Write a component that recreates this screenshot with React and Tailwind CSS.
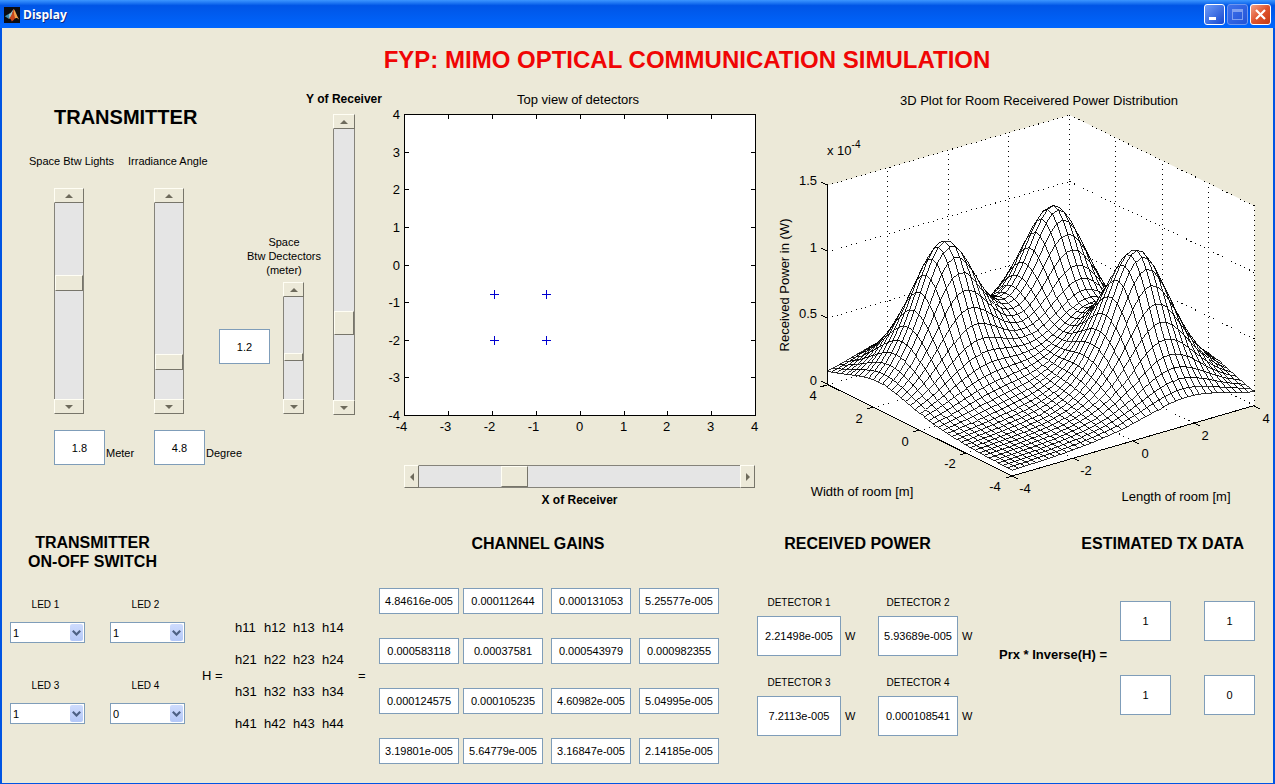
import React from "react";

const valueBox =
  "border border-[#7f9db9] bg-white text-center text-[11px] text-black outline-none";
const bevel =
  "border border-t-[#fffef4] border-l-[#fffef4] border-r-[#77756a] border-b-[#77756a] bg-[#ece9d8]";

const arrowPoints = {
  up: "4,0 8,4 0,4",
  down: "0,0 8,0 4,4",
  left: "4,0 4,8 0,4",
  right: "0,0 4,4 0,8",
};

function ArrowButton({ dir, label }) {
  const vertical = dir === "up" || dir === "down";
  return (
    <button
      type="button"
      aria-label={label}
      className={`flex shrink-0 items-center justify-center ${bevel} ${vertical ? "h-[15px] w-full" : "h-full w-[15px]"}`}
    >
      <svg
        width={vertical ? 8 : 4}
        height={vertical ? 4 : 8}
        viewBox={vertical ? "0 0 8 4" : "0 0 4 8"}
        aria-hidden="true"
      >
        <polygon points={arrowPoints[dir]} fill="#6e6b5c" />
      </svg>
    </button>
  );
}

const thumb =
  "appearance-none [&::-webkit-slider-thumb]:appearance-none [&::-webkit-slider-thumb]:box-border [&::-webkit-slider-thumb]:rounded-none [&::-webkit-slider-thumb]:border [&::-webkit-slider-thumb]:border-t-[#fffef4] [&::-webkit-slider-thumb]:border-l-[#fffef4] [&::-webkit-slider-thumb]:border-r-[#77756a] [&::-webkit-slider-thumb]:border-b-[#77756a] [&::-webkit-slider-thumb]:bg-[#ece9d8]";

function VerticalSlider({ id, label, value, size, thumbSize }) {
  return (
    <div className={`flex shrink-0 flex-col ${size}`}>
      <ArrowButton dir="up" label={`Increase ${label}`} />
      <input
        id={id}
        type="range"
        min="0"
        max="1000"
        defaultValue={value}
        aria-label={label}
        className={`m-0 min-h-0 w-full flex-1 border-r border-l border-[#85837a] bg-[#e5e5e5] [direction:rtl] [writing-mode:vertical-lr] ${thumb} ${thumbSize}`}
      />
      <ArrowButton dir="down" label={`Decrease ${label}`} />
    </div>
  );
}

function TransmitterPanel() {
  return (
    <section className="whitespace-nowrap">
      <h2 className="mt-3 pl-[52px] text-[20px] leading-[26px] font-bold">TRANSMITTER</h2>
      <div className="mt-6 flex gap-[14px] pl-[27px] text-[11px] leading-[14px]">
        <label htmlFor="space-lights">Space Btw Lights</label>
        <label htmlFor="irradiance">Irradiance Angle</label>
      </div>
      <div className="mt-5 flex gap-[70px] pl-[52px]">
        <VerticalSlider
          id="space-lights"
          label="Space Btw Lights"
          value={598}
          size="h-[226px] w-[30px]"
          thumbSize="[&::-webkit-slider-thumb]:h-[16px] [&::-webkit-slider-thumb]:w-[28px]"
        />
        <VerticalSlider
          id="irradiance"
          label="Irradiance Angle"
          value={163}
          size="h-[226px] w-[30px]"
          thumbSize="[&::-webkit-slider-thumb]:h-[16px] [&::-webkit-slider-thumb]:w-[28px]"
        />
      </div>
      <div className="mt-4 flex pl-[52px] text-[11px]">
        {[
          ["1.8", "Meter"],
          ["4.8", "Degree"],
        ].map(([v, unit]) => (
          <label key={unit} className="flex w-[100px] shrink-0 items-center gap-px">
            <input className={`h-[35px] w-[51px] shrink-0 ${valueBox}`} defaultValue={v} />
            <span className="pt-3">{unit}</span>
          </label>
        ))}
      </div>
    </section>
  );
}

function ReceiverPanel() {
  return (
    <section className="flex">
      <div className="w-[108px] shrink-0 pt-[143px]">
        <label
          htmlFor="space-detectors"
          className="block pl-[22px] text-center text-[11px] leading-[14px] whitespace-nowrap"
        >
          Space
          <br />
          Btw Dectectors
          <br />
          (meter)
        </label>
        <div className="mt-[5px] flex items-start gap-[13px]">
          <input
            aria-label="Space between detectors in meters"
            className={`mt-[47px] h-[35px] w-[51px] ${valueBox}`}
            defaultValue="1.2"
          />
          <VerticalSlider
            id="space-detectors"
            label="Space Btw Detectors"
            value={400}
            size="h-[132px] w-[21px]"
            thumbSize="[&::-webkit-slider-thumb]:h-[8px] [&::-webkit-slider-thumb]:w-[19px]"
          />
        </div>
      </div>
      <div className="flex w-[34px] flex-col items-center">
        <label
          htmlFor="y-receiver"
          className="mb-2 text-[12px] leading-[14px] font-bold whitespace-nowrap"
        >
          Y of Receiver
        </label>
        <VerticalSlider
          id="y-receiver"
          label="Y of Receiver"
          value={263}
          size="h-[301px] w-[22px]"
          thumbSize="[&::-webkit-slider-thumb]:h-[24px] [&::-webkit-slider-thumb]:w-[20px]"
        />
      </div>
    </section>
  );
}

function DetectorPlot() {
  const ticks = [-4, -3, -2, -1, 0, 1, 2, 3, 4];
  const px = (v) => Math.round(404 + (v + 4) * 43.9) + 0.5;
  const py = (v) => Math.round(415 - (v + 4) * 37.6) + 0.5;
  const marks = [
    [494, 295],
    [546, 295],
    [494, 341],
    [546, 341],
  ];
  return (
    <svg
      viewBox="387 92 378 346"
      className="block h-auto w-full"
      fontFamily="'Liberation Sans', Arial, sans-serif"
      fontSize="13"
      role="img"
      aria-label="Top view of detectors"
    >
      <text x="578" y="104" textAnchor="middle">
        Top view of detectors
      </text>
      <rect x="404.5" y="114.5" width="351" height="301" fill="#fff" stroke="#000" />
      {ticks.map((t) => (
        <g key={t} stroke="#000">
          <path
            d={`M${px(t)} 415v-4M${px(t)} 115v4M405 ${py(t)}h4M755 ${py(t)}h-4`}
            fill="none"
          />
          <text stroke="none" x={px(t) - (t < 0 ? 3 : 1)} y="431" textAnchor="middle">
            {t}
          </text>
          <text stroke="none" x="400" y={py(t) + 4} textAnchor="end">
            {t}
          </text>
        </g>
      ))}
      {marks.map(([x, y]) => (
        <path
          key={`${x}-${y}`}
          d={`M${x - 4} ${y - 0.5}h9M${x + 0.5} ${y - 5}v9`}
          stroke="#0000d0"
          fill="none"
        />
      ))}
    </svg>
  );
}

function project(l, w, z) {
  return [
    1012 + ((l + 4) / 8) * 242.5 - ((w + 4) / 8) * 185,
    476 - ((l + 4) / 8) * 70.5 - ((w + 4) / 8) * 91 - z * 133,
  ];
}

const lights = [
  [-1.8, 1.8],
  [1.8, 1.8],
  [1.8, -1.8],
];

function receivedPower(l, w) {
  return lights.reduce((sum, [a, b]) => {
    const r2 = (l - a) ** 2 + (w - b) ** 2;
    return sum + 1.04 * Math.pow(1 + r2 / 3.3, -2);
  }, 0.028);
}

function meshCells() {
  const n = 40;
  const at = (i) => -4 + (8 * i) / n;
  const cells = [];
  for (let i = n - 1; i >= 0; i--) {
    for (let j = n - 1; j >= 0; j--) {
      const corners = [
        [at(i), at(j)],
        [at(i + 1), at(j)],
        [at(i + 1), at(j + 1)],
        [at(i), at(j + 1)],
      ];
      cells.push(
        "M" +
          corners
            .map(([l, w]) =>
              project(l, w, receivedPower(l, w))
                .map((c) => c.toFixed(1))
                .join(" ")
            )
            .join("L") +
          "Z"
      );
    }
  }
  return cells;
}

const cells = meshCells();

function line(a, b) {
  return `M${project(...a).join(" ")}L${project(...b).join(" ")}`;
}

const gridLines = [
  ...[0, 0.5, 1, 1.5].flatMap((z) => [
    line([-4, 4, z], [4, 4, z]),
    line([4, 4, z], [4, -4, z]),
  ]),
  ...[-2, 0, 2, 4].flatMap((v) => [
    line([v, 4, 0], [v, 4, 1.5]),
    line([4, -v, 0], [4, -v, 1.5]),
    line([v, -4, 0], [v, 4, 0]),
    line([-4, v, 0], [4, v, 0]),
  ]),
];

function PowerPlot() {
  const zLabels = [
    ["1.5", 185],
    ["1", 252],
    ["0.5", 318],
    ["0", 385],
  ];
  const widthLabels = [
    ["4", 813, 400],
    ["2", 859, 423],
    ["0", 905, 446],
    ["-2", 950, 468],
    ["-4", 995, 491],
  ];
  const lengthLabels = [
    ["-4", 1025, 493],
    ["-2", 1086, 475],
    ["0", 1145, 458],
    ["2", 1205, 440],
    ["4", 1266, 423],
  ];
  return (
    <svg
      viewBox="765 92 508 418"
      className="block h-auto w-full"
      fontFamily="'Liberation Sans', Arial, sans-serif"
      fontSize="13"
      role="img"
      aria-label="3D plot of received power over the room"
    >
      <text x="1039" y="105" textAnchor="middle">
        3D Plot for Room Receivered Power Distribution
      </text>
      <polygon
        points="827,185.5 1069.5,115 1254.5,206 1254.5,405.5 1012,476 827,385"
        fill="#fff"
      />
      <path
        d={gridLines.join("")}
        fill="none"
        stroke="#000"
        strokeDasharray="1 4"
        shapeRendering="crispEdges"
      />
      <g fill="#fff" stroke="#000" strokeWidth="0.8" shapeRendering="crispEdges">
        {cells.map((d, i) => (
          <path key={i} d={d} />
        ))}
      </g>
      <path
        d="M827.500 184V384.500L1012 476L1254.500 405.500"
        fill="none"
        stroke="#000"
        shapeRendering="crispEdges"
      />
      <path
        d="M827 185l-6-3M827 251l-6-3M827 318l-6-3M827 384l-6-3M827 385l-7 2M873 407l-6 2M919 430l-6 2M966 453l-6 2M1012 476l-6 2M1012 476l6 3M1073 458l6 3M1133 441l6 3M1194 423l6 3M1254 406l6 3"
        stroke="#000"
        fill="none"
        shapeRendering="crispEdges"
      />
      <text x="827" y="155">
        x 10
        <tspan dy="-7" fontSize="10">
          -4
        </tspan>
      </text>
      {zLabels.map(([t, y]) => (
        <text key={t} x="817" y={y} textAnchor="end">
          {t}
        </text>
      ))}
      {[...widthLabels, ...lengthLabels].map(([t, x, y]) => (
        <text key={`${x}`} x={x} y={y} textAnchor="middle">
          {t}
        </text>
      ))}
      <text x="862" y="496" textAnchor="middle">
        Width of room [m]
      </text>
      <text x="1176" y="501" textAnchor="middle">
        Length of room [m]
      </text>
      <text transform="translate(789 285) rotate(-90)" textAnchor="middle">
        Received Power in (W)
      </text>
    </svg>
  );
}

function LedSelect({ name, value }) {
  return (
    <label className="flex w-[75px] flex-col items-center gap-[10px] text-[10px] leading-[14px]">
      <span className="pr-1">{name}</span>
      <span className="relative block w-full">
        <select
          defaultValue={value}
          className="block h-[21px] w-full appearance-none border border-[#7f9db9] bg-white pl-[2px] text-[11px] text-black outline-none"
        >
          <option>0</option>
          <option>1</option>
        </select>
        <span className="pointer-events-none absolute top-[2px] right-[2px] flex h-[17px] w-[13px] items-center justify-center rounded-[2px] bg-linear-to-b from-[#cfdcfd] to-[#b3c7f7]">
          <svg width="9" height="6" viewBox="0 0 9 6" aria-hidden="true">
            <path d="M0.800 0.800L4.500 4.500L8.200 0.800" fill="none" stroke="#4d6185" strokeWidth="2.200" />
          </svg>
        </span>
      </span>
    </label>
  );
}

function SwitchPanel() {
  return (
    <section>
      <h2 className="pt-[3px] pl-[26px] text-[16px] leading-[19px] font-bold">
        <span className="block w-[129px] text-center">
          TRANSMITTER
          <br />
          ON-OFF SWITCH
        </span>
      </h2>
      <div className="mt-[27px] grid grid-cols-[75px_75px] gap-x-[25px] gap-y-9 pl-2">
        <LedSelect name="LED 1" value="1" />
        <LedSelect name="LED 2" value="1" />
        <LedSelect name="LED 3" value="1" />
        <LedSelect name="LED 4" value="0" />
      </div>
    </section>
  );
}

function MatrixPanel() {
  return (
    <section className="flex h-[210px] items-center pt-[82px] text-[13px] whitespace-nowrap">
      <span className="w-[33px]">H =</span>
      <div className="grid grid-cols-4 leading-8">
        {[1, 2, 3, 4].flatMap((r) =>
          [1, 2, 3, 4].map((c) => (
            <span key={`${r}${c}`} className="w-[29px]">
              h{r}
              {c}
            </span>
          ))
        )}
      </div>
      <span className="pl-[7px]">=</span>
    </section>
  );
}

const gains = [
  "4.84616e-005", "0.000112644", "0.000131053", "5.25577e-005",
  "0.000583118", "0.00037581", "0.000543979", "0.000982355",
  "0.000124575", "0.000105235", "4.60982e-005", "5.04995e-005",
  "3.19801e-005", "5.64779e-005", "3.16847e-005", "2.14185e-005",
];

function GainsPanel() {
  return (
    <section>
      <h2 className="w-[318px] pt-1 text-center text-[16px] leading-5 font-bold">
        CHANNEL GAINS
      </h2>
      <div className="mt-[34px] grid grid-cols-[84px_88px_88px_80px] gap-y-6">
        {gains.map((g, i) => (
          <input
            key={g}
            aria-label={`Channel gain h${Math.floor(i / 4) + 1}${(i % 4) + 1}`}
            defaultValue={g}
            className={`h-[26px] w-20 ${valueBox}`}
          />
        ))}
      </div>
    </section>
  );
}

const detectors = ["2.21498e-005", "5.93689e-005", "7.2113e-005", "0.000108541"];

function PowerPanel() {
  return (
    <section className="pl-[2px]">
      <h2 className="w-[201px] pt-1 text-center text-[16px] leading-5 font-bold">
        RECEIVED POWER
      </h2>
      <div className="mt-[42px] grid grid-cols-[121px_100px] gap-y-5">
        {detectors.map((v, i) => (
          <label key={v} className="grid grid-cols-[max-content_max-content] gap-x-1 gap-y-[6px]">
            <span className="text-center text-[10px] leading-[14px]">DETECTOR {i + 1}</span>
            <span />
            <input
              defaultValue={v}
              className={`h-10 ${i % 2 ? "w-20" : "w-[84px]"} ${valueBox}`}
            />
            <span className="self-center text-[11px]">W</span>
          </label>
        ))}
      </div>
    </section>
  );
}

function EstimatePanel() {
  return (
    <section className="pr-[18px]">
      <h2 className="pt-1 pr-[11px] text-right text-[16px] leading-5 font-bold">
        ESTIMATED TX DATA
      </h2>
      <div className="mt-[47px] flex items-center justify-between pl-[2px]">
        <span className="pb-[6px] text-[13px] font-bold whitespace-nowrap">Prx * Inverse(H) =</span>
        <div className="grid grid-cols-2 gap-x-[33px] gap-y-[34px]">
          {["1", "1", "1", "0"].map((v, i) => (
            <input
              key={i}
              aria-label={`Estimated data ${i + 1}`}
              defaultValue={v}
              className={`h-10 w-[51px] ${valueBox}`}
            />
          ))}
        </div>
      </div>
    </section>
  );
}

function TitleBar() {
  const base = "flex h-[21px] w-[21px] items-center justify-center rounded-[3px] border";
  return (
    <header className="flex h-7 items-center bg-linear-to-b from-[#3c96ff] via-[#0055e6] via-20% to-[#0066fe] pt-px pr-1 pl-1">
      <svg width="16" height="16" viewBox="0 0 16 16" aria-hidden="true">
        <rect width="16" height="16" fill="#0c0c10" />
        <path d="M0.800 9.200L5 6.800L7.500 8.800L5 12L3.500 11Z" fill="#3f8fae" />
        <path d="M5 6.800C7 6.500 7.800 4.200 9.600 2L7.800 8.800L5 12Z" fill="#9cc4c8" />
        <path d="M9.600 2C8.500 5 8 8.500 5 11.600C6.500 11.200 7.200 13 7.800 14.500C10 13.500 10.300 11.200 11.800 11Z" fill="#c8451c" />
        <path d="M9.600 2C11.200 3 12.500 8 15.200 12.600C13.500 11 12.500 10.600 11.200 11.400C10.200 8.500 9.800 6 9.600 2Z" fill="#f3a04a" />
      </svg>
      <h1 className="ml-[3px] flex-1 font-['Open_Sans','Noto_Sans',sans-serif] text-[12px] font-bold text-white [text-shadow:1px_1px_0_#0a2a86]">
        Display
      </h1>
      <div className="flex gap-[2px]">
        <button type="button" aria-label="Minimize" className={`${base} border-white bg-linear-to-br from-[#6f9bf7] to-[#1746cf]`}>
          <svg width="13" height="13" viewBox="0 0 13 13" aria-hidden="true">
            <rect x="1" y="9" width="7" height="3" fill="#fff" />
          </svg>
        </button>
        <button type="button" aria-label="Maximize" className={`${base} border-[#6f97f0] bg-linear-to-br from-[#3f72ec] to-[#2353d6]`}>
          <svg width="13" height="13" viewBox="0 0 13 13" aria-hidden="true">
            <rect x="1.500" y="1.500" width="10" height="10" fill="none" stroke="#7fa0f0" />
            <rect x="1" y="1" width="11" height="3" fill="#7fa0f0" />
          </svg>
        </button>
        <button type="button" aria-label="Close" className={`${base} border-white bg-linear-to-br from-[#f0a087] via-[#e0532c] to-[#c43a12]`}>
          <svg width="13" height="13" viewBox="0 0 13 13" aria-hidden="true">
            <path d="M2 2L11 11M11 2L2 11" stroke="#fff" strokeWidth="2.200" />
          </svg>
        </button>
      </div>
    </header>
  );
}

export default function App() {
  return (
    <div className="flex min-h-screen flex-col bg-[#0054e3] font-['Liberation_Sans',Arial,sans-serif] text-black">
      <TitleBar />
      <main className="mr-[2px] mb-px ml-[2px] flex-1 bg-[#ece9d8]">
        <h1 className="flex h-16 items-center justify-center pl-[99px] text-[24px] font-bold text-[#f00505]">
          FYP: MIMO OPTICAL COMMUNICATION SIMULATION
        </h1>
        <div className="grid grid-cols-[217px_168px_minmax(0,378fr)_minmax(0,508fr)]">
          <TransmitterPanel />
          <ReceiverPanel />
          <section>
            <DetectorPlot />
            <div className="mt-[27px] pr-[10px] pl-[17px]">
              <div className="flex h-[23px]">
                <ArrowButton dir="left" label="Decrease X of Receiver" />
                <input
                  id="x-receiver"
                  type="range"
                  min="0"
                  max="1000"
                  defaultValue="278"
                  className={`m-0 h-full min-w-0 flex-1 border-y border-[#85837a] bg-[#e5e5e5] ${thumb} [&::-webkit-slider-thumb]:h-[21px] [&::-webkit-slider-thumb]:w-[27px]`}
                />
                <ArrowButton dir="right" label="Increase X of Receiver" />
              </div>
              <label
                htmlFor="x-receiver"
                className="mt-1 block text-center text-[12px] leading-4 font-bold"
              >
                X of Receiver
              </label>
            </div>
          </section>
          <PowerPlot />
        </div>
        <div className="mt-5 grid grid-cols-[200px_177px_minmax(0,376fr)_minmax(0,242fr)_minmax(0,276fr)]">
          <SwitchPanel />
          <MatrixPanel />
          <GainsPanel />
          <PowerPanel />
          <EstimatePanel />
        </div>
      </main>
    </div>
  );
}
